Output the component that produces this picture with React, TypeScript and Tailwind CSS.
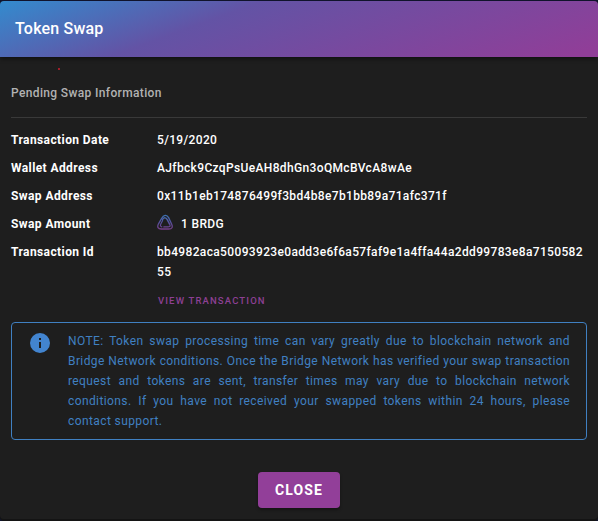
import type { ReactNode } from "react";

function BridgeLogo() {
  return (
    <svg width="17" height="17" viewBox="0 0 17 17" fill="none" className="shrink-0">
      <defs>
        <linearGradient id="bridge" x1="8" y1="1" x2="8" y2="16" gradientUnits="userSpaceOnUse">
          <stop offset="0" stopColor="#3c74b4" />
          <stop offset="0.5" stopColor="#57509c" />
          <stop offset="1" stopColor="#783c84" />
        </linearGradient>
      </defs>
      <g stroke="url(#bridge)" strokeLinecap="round" strokeLinejoin="round">
        <path strokeWidth="1.3" d="M4.8 4.2C6.4.6 9.8.3 11.6 3.6l3 6.4c1.5 3.3.4 5-2.8 5H4.2C1 15-.1 13 1.5 9.8z" />
        <path strokeWidth="1.5" d="M5.6 5.4c1.7-2.4 3.6-1.8 4.8.4l2.2 4.4" />
        <path strokeWidth="1.2" d="M13 10.8c.5 1.8-.7 2.2-2.4 2.1H6.8" />
        <path strokeWidth="1.2" d="M4.8 12.8c-1.6-.3-1.7-1.6-.9-3.1l1.7-3.2" />
      </g>
    </svg>
  );
}

function Row({ label, children }: { label: string; children: ReactNode }) {
  return (
    <div className="flex py-1 text-[12px] leading-5 text-white">
      <div className="w-[146px] shrink-0 font-bold tracking-[0.41px]">{label}</div>
      <div className="min-w-0 flex-1 font-medium tracking-[0.35px] break-all">{children}</div>
    </div>
  );
}

export default function App() {
  return (
    <div className="h-[521px] w-[598px] overflow-hidden bg-[#11152f] pt-px font-[Roboto,sans-serif]">
      <div className="flex h-[518px] flex-col rounded bg-[#1e1e1e] shadow-[0_2px_0_#141414]">
        <header className="flex h-14 shrink-0 items-center rounded-t bg-[linear-gradient(160deg,#338bce_0%,#6353a5_35%,#903e98_96%)] px-[15px] shadow-[0_2px_4px_rgba(0,0,0,0.45)]">
          <h1 className="text-[16px] font-medium tracking-[0.2px] text-white">Token Swap</h1>
        </header>
        <main className="flex flex-col px-[11px]">
          <div className="flex h-[26px] pt-[11px] pl-[47px]">
            <span className="size-[2px] bg-[#a01f2a]" />
          </div>
          <h2 className="h-[35px] border-b border-[#393939] text-[12px] leading-5 font-medium tracking-[0.36px] text-[#b2b2b2]">
            Pending Swap Information
          </h2>
          <div className="pt-2">
            <Row label="Transaction Date">5/19/2020</Row>
            <Row label="Wallet Address">AJfbck9CzqPsUeAH8dhGn3oQMcBVcA8wAe</Row>
            <Row label="Swap Address">0x11b1eb174876499f3bd4b8e7b1bb89a71afc371f</Row>
            <Row label="Swap Amount">
              <div className="flex h-5 items-center gap-[7px]">
                <div className="-mt-[3px] w-[17px]">
                  <BridgeLogo />
                </div>
                <span>1 BRDG</span>
              </div>
            </Row>
            <Row label="Transaction Id">bb4982aca50093923e0add3e6f6a57faf9e1a4ffa44a2dd99783e8a715058255</Row>
          </div>
          <button className="mt-[5px] ml-[147px] h-5 w-fit text-[9.5px] leading-5 font-medium tracking-[1.15px] text-[#8d4094]">
            VIEW TRANSACTION
          </button>
          <div className="mt-[11px] flex h-[118px] rounded border border-[#4080c2] py-2 pr-4 pl-4 text-[#4080c2]">
            <svg viewBox="0 0 24 24" className="mr-4 size-6 shrink-0" fill="#4284cf">
              <path d="M13 9h-2V7h2m0 10h-2v-6h2m-1-9A10 10 0 0 0 2 12a10 10 0 0 0 10 10 10 10 0 0 0 10-10A10 10 0 0 0 12 2z" />
            </svg>
            <p className="flex-1 text-justify text-[12px] leading-5 tracking-[0.4px]">
              NOTE: Token swap processing time can vary greatly due to blockchain network and Bridge Network conditions. Once the Bridge Network has verified your swap transaction request and tokens are sent, transfer times may vary due to blockchain network conditions. If you have not received your swapped tokens within 24 hours, please contact support.
            </p>
          </div>
          <button className="mt-8 h-9 w-[82px] self-center rounded bg-[#923f99] text-[14px] font-bold tracking-[1.1px] text-white shadow-[0_2px_3px_rgba(0,0,0,0.35)]">
            CLOSE
          </button>
        </main>
      </div>
    </div>
  );
}
